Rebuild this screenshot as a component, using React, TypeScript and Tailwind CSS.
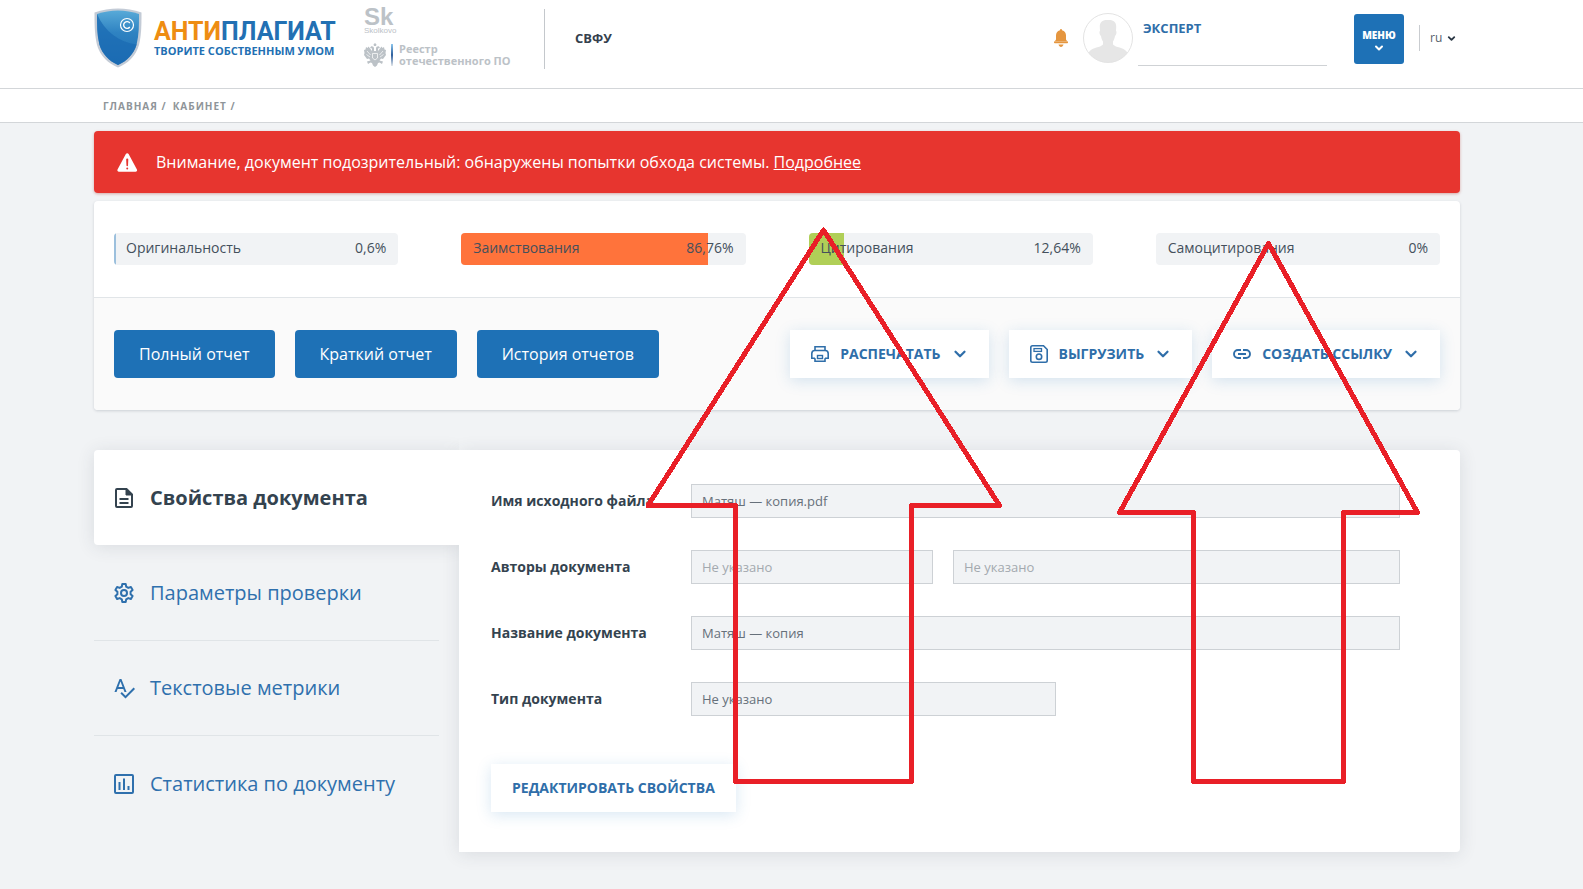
import React from 'react';
import { FiChevronDown } from 'react-icons/fi';
import { IoWarning } from 'react-icons/io5';
import { MdSpellcheck } from 'react-icons/md';

interface Metric {
  label: string;
  value: string;
  percent: number;
  fill: string;
}

const metrics: Metric[] = [
  { label: 'Оригинальность', value: '0,6%', percent: 0.6, fill: 'bg-[#9cc0dd]' },
  { label: 'Заимствования', value: '86,76%', percent: 86.76, fill: 'bg-[#ff733b]' },
  { label: 'Цитирования', value: '12,64%', percent: 12.64, fill: 'bg-[#b0cf57]' },
  { label: 'Самоцитирования', value: '0%', percent: 0, fill: 'bg-[#c7b9e0]' },
];

const ShieldLogo = () => (
  <svg className="shrink-0" width="48" height="60" viewBox="0 0 48 60" aria-hidden="true">
    <defs>
      <linearGradient id="shield" x1="0" y1="0" x2="0" y2="1">
        <stop offset="0" stopColor="#58aad8" />
        <stop offset="0.4" stopColor="#2f83c2" />
        <stop offset="1" stopColor="#1c6cb2" />
      </linearGradient>
    </defs>
    <path
      d="M24 0.5C16.500 0.500 8 2 0.500 4.500C0.500 16 0.500 26 3 37C6 47.500 14 55.500 24 59.500C34 55.500 42 47.500 45 37C47.500 26 47.500 16 47.500 4.500C40 2 31.500 0.500 24 0.500Z"
      fill="#c3cbd6"
    />
    <path
      d="M24 2.500C17 2.500 9.500 3.800 3 6C3 17 3 26.500 5.400 36.500C8.200 46 15 53 24 57C33 53 39.800 46 42.600 36.500C45 26.500 45 17 45 6C38.500 3.800 31 2.500 24 2.500Z"
      fill="url(#shield)"
    />
    <path
      d="M3 6C3 17 3 26.500 5.400 36.500C8.200 46 15 53 24 57C33 53 39.800 46 42.600 36.500C25 34 11 24 3 6Z"
      fill="#1b6bb3"
      opacity="0.75"
    />
    <circle cx="33" cy="17" r="6.500" fill="none" stroke="#fff" strokeWidth="1.200" />
    <path d="M35.800 15A3.400 3.400 0 1 0 35.800 19" fill="none" stroke="#fff" strokeWidth="1.300" />
  </svg>
);

const EagleEmblem = () => (
  <svg width="22" height="24" viewBox="0 0 22 24" fill="#bcc2c7" aria-hidden="true">
    <path d="M11 0L12.500 1.500L12 3H10L9.500 1.500Z" />
    <path d="M7 3.500C8.500 3 10 4 10 5.500V8H12V5.500C12 4 13.500 3 15 3.500L16 5L14 5.500L14 8L17.500 3.500L18.500 5L20 4L20.500 6.500L22 7L21.500 10L22 12L20.500 14L19 16L17 15.500L15.500 17.500L19 18.500L18 21L15.500 19.500L14 20L13 22.500L11 24L9 22.500L8 20L6.500 19.500L4 21L3 18.500L6.500 17.500L5 15.500L3 16L1.500 14L0 12L0.500 10L0 7L1.500 6.500L2 4L3.500 5L4.500 3.500L8 8V5.500L6 5Z" />
    <path
      d="M3 8L6.500 12M2.500 11.500L6 14M19 8L15.500 12M19.500 11.500L16 14M8.500 10.500H13.500V15L11 17L8.500 15Z"
      fill="none"
      stroke="#fff"
      strokeWidth="0.700"
    />
  </svg>
);

const Bell = () => (
  <svg width="14" height="18" viewBox="0 0 14 18" fill="#e5963f" aria-hidden="true">
    <path d="M6 1.200C6 -0.300 8 -0.300 8 1.200C10.800 1.800 12 4 12 6.500V10.500L13 12H1L2 10.500V6.500C2 4 3.200 1.800 6 1.200Z" />
    <rect x="0" y="12.200" width="14" height="2" rx="0.800" />
    <path d="M4.500 15.500H9.500C9 17.200 8.200 17.900 7 17.900S5 17.200 4.500 15.500Z" />
  </svg>
);

const Avatar = () => (
  <svg width="50" height="50" viewBox="0 0 50 50" aria-hidden="true">
    <defs>
      <clipPath id="avatar">
        <circle cx="25" cy="25" r="24.500" />
      </clipPath>
    </defs>
    <g clipPath="url(#avatar)" fill="#e6e6e6">
      <path d="M25 7C30 6.500 33.500 9 33.200 14L33 18C34 18.500 33.500 22 32 23C31.500 26 30.500 27.500 30 28.500V31.500C33 35 40 33.500 44 39V50H6V39C10 33.500 17 35 20 31.500V28.500C19 27 18.500 26 18 23C16.500 22 16 18.500 17 18L16.800 14C16.500 9 20 6.500 25 7Z" />
    </g>
    <circle cx="25" cy="25" r="24.500" fill="none" stroke="#e3e3e3" />
  </svg>
);

const PrinterIcon = () => (
  <svg width="18" height="16" viewBox="0 0 18 16" fill="none" stroke="currentColor" strokeWidth="1.600" aria-hidden="true">
    <path d="M4 4.500V0.800H14V4.500" />
    <path d="M4 12.200H0.800V7.500Q0.800 4.500 3.800 4.500H14.200Q17.200 4.500 17.200 7.500V12.200H14" />
    <path d="M4 15.200V12.200M14 15.200V12.200M3.200 15.200H14.800" />
    <rect x="6.500" y="9.500" width="5" height="3" strokeWidth="1.400" />
  </svg>
);

const SaveIcon = () => (
  <svg width="18" height="18" viewBox="0 0 18 18" fill="none" stroke="currentColor" strokeWidth="1.600" aria-hidden="true">
    <path d="M2.500 0.800H13.500L17.200 4.500V15.500Q17.200 17.200 15.500 17.200H2.500Q0.800 17.200 0.800 15.500V2.500Q0.800 0.800 2.500 0.800Z" />
    <rect x="4" y="3.600" width="7.500" height="2.800" strokeWidth="1.300" />
    <circle cx="9" cy="11.700" r="2.700" />
  </svg>
);

const LinkIcon = () => (
  <svg width="18" height="10" viewBox="0 0 18 10" fill="none" stroke="currentColor" strokeWidth="1.900" aria-hidden="true">
    <path d="M8 1H5A4 4 0 0 0 5 9H8M10 1H13A4 4 0 0 1 13 9H10M5 5H13" />
  </svg>
);

const DocumentIcon = () => (
  <svg width="24" height="24" viewBox="0 0 24 24" fill="none" stroke="currentColor" strokeWidth="2" aria-hidden="true">
    <path d="M5 3H14.500L20 8.500V20Q20 21 19 21H5Q4 21 4 20V4Q4 3 5 3Z" />
    <path d="M14 3V9H20Z" fill="currentColor" strokeWidth="1" />
    <path d="M7.500 13H16.500M7.500 17H16.500" />
  </svg>
);

const GearIcon = () => (
  <svg width="24" height="24" viewBox="0 0 24 24" fill="none" stroke="currentColor" strokeWidth="2" strokeLinejoin="round" aria-hidden="true">
    <path d="M10.300 3H13.700L14.200 5.700L16.300 6.900L18.900 6L20.600 8.900L18.600 10.700V13.300L20.600 15.100L18.900 18L16.300 17.100L14.200 18.300L13.700 21H10.300L9.800 18.300L7.700 17.100L5.100 18L3.400 15.100L5.400 13.300V10.700L3.400 8.900L5.100 6L7.700 6.900L9.800 5.700Z" />
    <circle cx="12" cy="12" r="3" />
  </svg>
);

const StatsIcon = () => (
  <svg width="24" height="24" viewBox="0 0 24 24" fill="none" stroke="currentColor" strokeWidth="2" aria-hidden="true">
    <rect x="3" y="3" width="18" height="18" rx="1" />
    <path d="M7.500 10V18M12 6.500V18M16.500 14V18" />
  </svg>
);

const tabs = [
  { label: 'Параметры проверки', icon: <GearIcon /> },
  { label: 'Текстовые метрики', icon: <MdSpellcheck size={24} /> },
  { label: 'Статистика по документу', icon: <StatsIcon /> },
];

const actions = [
  { label: 'РАСПЕЧАТАТЬ', icon: <PrinterIcon /> },
  { label: 'ВЫГРУЗИТЬ', icon: <SaveIcon /> },
  { label: 'СОЗДАТЬ ССЫЛКУ', icon: <LinkIcon /> },
];

const reports = ['Полный отчет', 'Краткий отчет', 'История отчетов'];

const inputClass =
  'h-[34px] min-w-0 border border-[#cdd1d5] bg-[#f1f3f5] px-2.5 text-[13px] text-[#66707a] placeholder:text-[#a3a9af] outline-none';

const Header = () => (
  <header className="flex h-[89px] items-start border-b border-[#d3d6d9] bg-white pl-[94px] pr-[127px]">
    <a href="#" className="mt-2 flex w-[240px] items-start gap-3">
      <ShieldLogo />
      <span className="mt-2.5 flex flex-col whitespace-nowrap font-bold text-[#2270b3]">
        <span className="font-['Roboto',sans-serif] text-[25px] leading-[27px]">
          <span className="text-[#ee8d12]">АНТИ</span>ПЛАГИАТ
        </span>
        <span className="text-[11px] leading-3">ТВОРИТЕ СОБСТВЕННЫМ УМОМ</span>
      </span>
    </a>
    <div className="ml-[30px] mt-1.5 flex w-[180px] flex-col text-[#bcc2c7]">
      <span className="font-['Liberation_Sans',sans-serif] text-2xl font-bold leading-[22px]">Sk</span>
      <span className="font-['Liberation_Sans',sans-serif] text-[8px] leading-[5px]">Skolkovo</span>
      <div className="mt-2.5 flex items-center gap-[5px] whitespace-nowrap">
        <EagleEmblem />
        <span className="h-[22px] w-0.5 bg-linear-to-b from-[#8fc8ee] via-[#2d5f9c] to-[#e5e8ea]" />
        <span className="pl-px text-[11px] font-bold leading-3">
          Реестр
          <br />
          отечественного ПО
        </span>
      </div>
    </div>
    <div className="mt-[9px] flex h-[60px] items-center border-l border-[#c4c8cc] pl-[30px] text-[13px] font-bold text-[#34404d]">
      СВФУ
    </div>
    <div className="ml-auto flex items-start">
      <button type="button" aria-label="Уведомления" className="mt-[29px]">
        <Bell />
      </button>
      <div className="ml-[15px] mt-[13px]">
        <Avatar />
      </div>
      <div className="ml-[5px] mt-[18px] h-12 w-[189px] border-b border-[#cfd2d5] pl-[5px]">
        <a href="#" className="block text-[13px] font-bold leading-5 text-[#2f6ea9]">
          ЭКСПЕРТ
        </a>
      </div>
      <button
        type="button"
        className="ml-[27px] mt-3.5 flex h-[50px] w-[50px] flex-col items-center rounded-[3px] bg-[#1e71b6] pt-3.5 text-[10px] font-extrabold leading-[14px] text-white"
      >
        МЕНЮ
        <FiChevronDown size={12} strokeWidth={4} />
      </button>
      <div className="relative ml-[15px] mt-[25px] flex h-[26px] items-center border-l border-[#c9ccd0]">
        <select aria-label="Язык" className="w-9 appearance-none bg-transparent pl-2.5 text-xs text-[#55606b] outline-none">
          <option>ru</option>
        </select>
        <FiChevronDown size={11} strokeWidth={4} className="pointer-events-none absolute left-[26px] text-[#2b3845]" />
      </div>
    </div>
  </header>
);

const Summary = () => (
  <section className="mt-2 rounded bg-white shadow-[0_1px_3px_rgba(60,75,90,0.2)]">
    <div className="grid grid-cols-4 gap-x-[63px] border-b border-[#e1e5e8] px-5 pb-8 pt-8">
      {metrics.map((m) => (
        <div key={m.label} className="relative h-8 overflow-hidden rounded bg-[#f1f3f5]">
          <div className={`h-full ${m.fill}`} style={{ width: `${m.percent}%` }} />
          <div className="absolute inset-0 flex h-[30px] items-center justify-between px-3 text-sm text-[#44505c]">
            <span>{m.label}</span>
            <span>{m.value}</span>
          </div>
        </div>
      ))}
    </div>
    <div className="flex items-center justify-between rounded-b bg-[#fafafa] px-5 py-8">
      <div className="flex gap-5">
        {reports.map((r) => (
          <button key={r} type="button" className="h-12 rounded bg-[#1e71b6] px-[25px] text-base text-white">
            {r}
          </button>
        ))}
      </div>
      <div className="flex gap-5">
        {actions.map((a) => (
          <button
            key={a.label}
            type="button"
            className="flex h-12 items-center gap-2.5 bg-white px-5 text-sm font-bold text-[#2f6ea9] shadow-[0_3px_14px_rgba(40,120,190,0.18)]"
          >
            <span className="flex w-5 justify-center">{a.icon}</span>
            {a.label}
            <FiChevronDown size={18} strokeWidth={3} />
          </button>
        ))}
      </div>
    </div>
  </section>
);

const Sidebar = () => (
  <nav className="w-[365px] shrink-0 text-xl">
    <a
      href="#"
      className="relative flex h-[95px] items-center gap-3.5 rounded-l bg-white pl-[18px] font-bold text-[#34434f] shadow-[0_2px_18px_rgba(50,60,70,0.12)] [clip-path:inset(-30px_0_-30px_-30px)]"
    >
      <DocumentIcon />
      Свойства документа
    </a>
    <div className="mr-5 divide-y divide-[#e0e4e7] pt-px">
      {tabs.map((t) => (
        <a key={t.label} href="#" className="flex h-[95px] items-center gap-3.5 pl-[18px] text-[#2f70ad]">
          {t.icon}
          {t.label}
        </a>
      ))}
    </div>
  </nav>
);

const Field = ({ id, label, children }: { id: string; label: string; children: React.ReactNode }) => (
  <div className="flex h-[34px] items-center">
    <label htmlFor={id} className="w-[200px] shrink-0 text-sm font-bold text-[#34434f]">
      {label}
    </label>
    {children}
  </div>
);

const PropertiesForm = () => (
  <form className="flex min-w-0 flex-1 flex-col gap-8 rounded rounded-l-none bg-white pb-10 pl-8 pr-[60px] pt-[34px] shadow-[0_2px_18px_rgba(50,60,70,0.12)]">
    <Field id="file" label="Имя исходного файла">
      <input id="file" readOnly value="Матяш — копия.pdf" className={`${inputClass} flex-1`} />
    </Field>
    <Field id="author" label="Авторы документа">
      <input id="author" readOnly placeholder="Не указано" className={`${inputClass} mr-5 w-[242px]`} />
      <input aria-label="Имя автора" readOnly placeholder="Не указано" className={`${inputClass} flex-1`} />
    </Field>
    <Field id="title" label="Название документа">
      <input id="title" readOnly value="Матяш — копия" className={`${inputClass} flex-1`} />
    </Field>
    <Field id="type" label="Тип документа">
      <input id="type" readOnly value="Не указано" className={`${inputClass} w-[365px]`} />
    </Field>
    <button
      type="button"
      className="mt-4 h-12 self-start bg-white px-[21px] text-sm font-bold text-[#2f6ea9] shadow-[0_3px_14px_rgba(40,120,190,0.18)]"
    >
      РЕДАКТИРОВАТЬ СВОЙСТВА
    </button>
  </form>
);

// Hand-drawn arrows on top of the page
const Arrows = () => (
  <svg
    className="pointer-events-none absolute left-0 top-0"
    width="1583"
    height="889"
    viewBox="0 0 1583 889"
    fill="none"
    stroke="#e91f27"
    strokeWidth="5"
    strokeLinejoin="round"
    shapeRendering="crispEdges"
    aria-hidden="true"
  >
    <path d="M823.500 230L999.500 505.500H911.500V781.500H735.500V505.500H648Z" />
    <path d="M1268.500 243.500L1417.500 512.500H1343.500V781.500H1193.500V512.500H1119.500Z" />
  </svg>
);

const App: React.FC = () => {
  return (
    <div className="relative min-h-screen overflow-hidden bg-[#f1f3f5] font-['Open_Sans','Noto_Sans',sans-serif]">
      <Header />
      <nav className="flex h-[34px] items-center gap-1.5 border-b border-[#d3d6d9] bg-white pl-[103px] pt-0.5 text-[10px] font-bold tracking-widest text-[#8f9599]">
        <span>
          <a href="#">ГЛАВНАЯ</a> /
        </span>
        <span>
          <a href="#">КАБИНЕТ</a> /
        </span>
      </nav>
      <main className="pb-9 pl-[94px] pr-[123px] pt-2">
        <div className="flex h-[62px] items-center gap-4 rounded bg-[#e7352f] pl-[21px] text-base text-white shadow-[0_1px_3px_rgba(180,60,50,0.4)]">
          <IoWarning size={25} />
          <p>
            Внимание, документ подозрительный: обнаружены попытки обхода системы.{' '}
            <a href="#" className="underline">
              Подробнее
            </a>
          </p>
        </div>
        <Summary />
        <div className="mt-10 flex">
          <Sidebar />
          <PropertiesForm />
        </div>
      </main>
      <Arrows />
    </div>
  );
};

export default App;
